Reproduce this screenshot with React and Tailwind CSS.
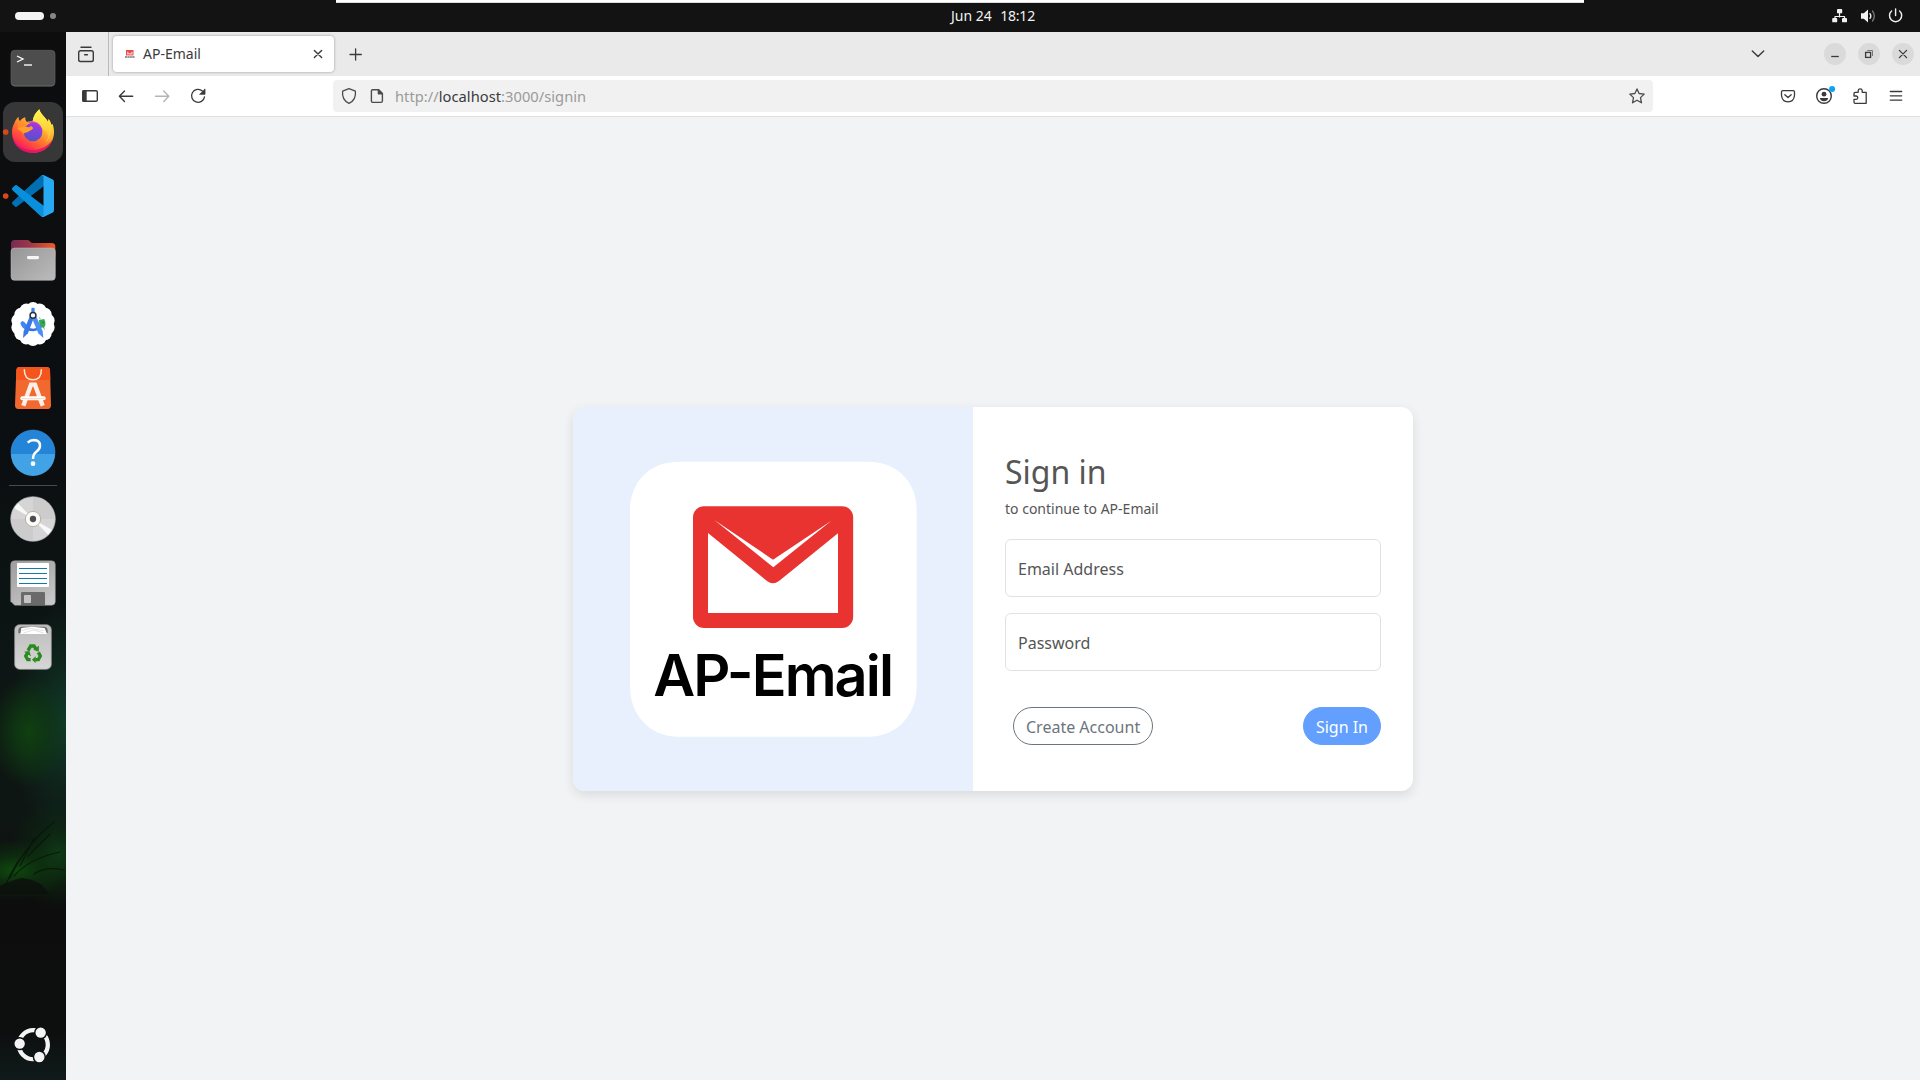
import React from "react";

const CHROME_FONT = "font-['Noto_Sans','Open_Sans',sans-serif]";

function DockIcon({ top, children }) {
  return (
    <svg className="block h-16 w-[66px] shrink-0" viewBox={`0 ${top} 198 192`}>
      {children}
    </svg>
  );
}

function Glyph({ className = "", children, width = 1.3 }) {
  return (
    <svg
      className={`block size-6 shrink-0 ${className}`}
      viewBox="0 0 24 24"
      fill="none"
      stroke="currentColor"
      strokeWidth={width}
      strokeLinecap="round"
      strokeLinejoin="round"
    >
      {children}
    </svg>
  );
}

function TerminalIcon() {
  return (
    <DockIcon top={108}>
      <rect x="33" y="151" width="132" height="107" rx="11" fill="#4d4d4d" stroke="#606060" strokeWidth="2" />
      <path d="M36 253 Q38 258 46 258 H152 Q161 258 163 253" fill="none" stroke="#6e6e6e" strokeWidth="2" />
      <path d="M51 168 L69 177 L51 186" fill="none" stroke="#fff" strokeWidth="4" />
      <path d="M72 195 H96" stroke="#fff" strokeWidth="4" />
    </DockIcon>
  );
}

function FirefoxIcon() {
  return (
    <DockIcon top={300}>
      <defs>
        <linearGradient id="ffBody" x1="140" y1="345" x2="65" y2="455" gradientUnits="userSpaceOnUse">
          <stop offset="0" stopColor="#fff04a" />
          <stop offset="0.3" stopColor="#ffb931" />
          <stop offset="0.55" stopColor="#ff7a2c" />
          <stop offset="0.8" stopColor="#ff3d45" />
          <stop offset="1" stopColor="#e8116f" />
        </linearGradient>
        <linearGradient id="ffGlobe" x1="105" y1="362" x2="90" y2="426" gradientUnits="userSpaceOnUse">
          <stop offset="0" stopColor="#a830e0" />
          <stop offset="0.5" stopColor="#7a45d8" />
          <stop offset="1" stopColor="#4f52c8" />
        </linearGradient>
        <linearGradient id="ffFlame" x1="125" y1="328" x2="140" y2="440" gradientUnits="userSpaceOnUse">
          <stop offset="0" stopColor="#fff44f" />
          <stop offset="0.5" stopColor="#ffd43c" />
          <stop offset="1" stopColor="#ff9a2c" stopOpacity="0" />
        </linearGradient>
      </defs>
      <rect x="9" y="306" width="180" height="180" rx="36" fill="#373737" />
      <circle cx="17" cy="396" r="8.5" fill="#d9481c" />
      <path d="M56 350 C55 356 57 360 60 363 C65 356 70 354 76 352 C75 358 77 363 81 366 C87 363 94 363 98 363 C100 348 108 337 118 328 C121 343 136 350 144 366 L146 358 C150 363 153 368 154 374 L157 371 C161 379 162 388 162 396 C162 431 134 459 99 459 C64 459 36 431 36 397 C36 386 39 377 43 370 C45 362 50 355 56 350 Z" fill="url(#ffBody)" />
      <path d="M37 412 C47 441 76 453 105 450 C130 447 148 434 158 418 C150 443 127 459 99 459 C66 459 42 440 37 412 Z" fill="#e20d70" opacity="0.8" />
      <path d="M98 363 C100 348 108 337 118 328 C121 343 136 350 144 366 L146 358 C157 374 164 408 146 432 C151 404 133 389 119 378 C110 371 103 366 98 363 Z" fill="url(#ffFlame)" />
      <circle cx="99" cy="396" r="28" fill="url(#ffGlobe)" />
      <path d="M82 366 C103 358 125 369 127 392 C121 381 112 378 106 379 C101 373 91 369 82 366 Z" fill="#b52ee0" opacity="0.8" />
      <path d="M53 386 C61 377 76 381 87 382 C92 377 96 377 99 384 C99 389 92 391 88 393 C84 399 74 396 70 402 C70 395 60 392 53 386 Z" fill="#ffa02b" />
      <path d="M60 363 C69 363 72 372 82 378 C77 382 67 378 54 385 C53 377 56 370 60 363 Z" fill="#ff8f2c" />
      <path d="M146 358 C151 382 152 405 140 424" fill="none" stroke="#ffe14a" strokeWidth="3" opacity="0.55" />
    </DockIcon>
  );
}

function CodeIcon() {
  return (
    <DockIcon top={492}>
      <circle cx="17" cy="588" r="8.5" fill="#d9481c" />
      <g transform="translate(36 525) scale(1.26)">
        <path fill="#0070b3" d="M96.46 10.8L75.86.88A6.23 6.23 0 0 0 68.75 2.08L1.3 63.58a4.17 4.17 0 0 0 0 6.17l5.51 5a4.17 4.17 0 0 0 5.32.24L93.36 13.37C96.09 11.3 100 13.25 100 16.67v-.24a6.25 6.25 0 0 0-3.54-5.63Z" />
        <path fill="#0a8fdd" d="M96.46 89.2L75.86 99.12a6.23 6.23 0 0 1-7.11-1.2L1.3 36.42a4.17 4.17 0 0 1 0-6.17l5.51-5a4.17 4.17 0 0 1 5.32-.24L93.36 86.63C96.09 88.7 100 86.75 100 83.33v.24a6.25 6.25 0 0 1-3.54 5.63Z" />
        <path fill="#27a9f3" d="M75.86 99.13a6.23 6.23 0 0 1-7.11-1.21C71.06 100.22 75 98.59 75 95.33V4.67C75 1.41 71.06-.22 68.75 2.08A6.23 6.23 0 0 1 75.86.87l20.6 9.91A6.25 6.25 0 0 1 100 16.41v67.18a6.25 6.25 0 0 1-3.54 5.63Z" />
      </g>
    </DockIcon>
  );
}

function FilesIcon() {
  return (
    <DockIcon top={24}>
      <defs>
        <linearGradient id="folderBack" x1="33" y1="0" x2="165" y2="0" gradientUnits="userSpaceOnUse">
          <stop offset="0" stopColor="#762a55" />
          <stop offset="0.45" stopColor="#a03848" />
          <stop offset="1" stopColor="#ef5a24" />
        </linearGradient>
        <linearGradient id="folderFront" x1="50" y1="84" x2="140" y2="182" gradientUnits="userSpaceOnUse">
          <stop offset="0" stopColor="#989898" />
          <stop offset="1" stopColor="#b8b8b8" />
        </linearGradient>
      </defs>
      <path d="M33 110 V71 Q33 60 44 60 H82 Q88 60 91 65 Q94 69 99 69 H155 Q166 69 166 80 V110 Z" fill="url(#folderBack)" />
      <rect x="33" y="84" width="133" height="97" rx="11" fill="url(#folderFront)" stroke="#c0c0c0" strokeWidth="1.5" />
      <rect x="81" y="108" width="36" height="9.5" rx="4" fill="#f6f6f6" />
    </DockIcon>
  );
}

function StudioIcon() {
  const lobes = Array.from({ length: 14 }, (_, i) => (i * Math.PI * 2) / 14 + Math.PI / 2);
  return (
    <DockIcon top={216}>
      <circle cx="99" cy="312" r="61.5" fill="#fff" />
      {lobes.map((a) => (
        <circle key={a} cx={99 + 46 * Math.cos(a)} cy={312 + 46 * Math.sin(a)} r="20" fill="#fff" />
      ))}
      <path d="M117 300 L133 297 Q138 308 136 316 L131 325 L118 317 Z" fill="#34a853" />
      <path d="M121 298 L118 292 M132 323 L133 329" stroke="#34a853" strokeWidth="2" />
      <circle cx="129" cy="307" r="1.8" fill="#124f24" />
      <path d="M67 309 Q79 330 101 330 Q113 329 121 322" fill="none" stroke="#3474e0" strokeWidth="8" strokeLinecap="round" />
      <path d="M61 309 Q66 300 73 306 L84 319 L77 329 Q65 324 61 309 Z" fill="#4285f4" />
      <path d="M90 287 L71 334 L69 354 L84 340 L101 295 Z" fill="#3b78e7" />
      <path d="M108 287 L128 334 L130 354 L115 340 L96 295 Z" fill="#4c8df6" />
      <rect x="94" y="263" width="10" height="18" rx="4" fill="#4285f4" />
      <circle cx="99" cy="286" r="8.8" fill="#fff" stroke="#263238" strokeWidth="4.5" />
    </DockIcon>
  );
}

function StoreIcon() {
  return (
    <DockIcon top={408}>
      <path d="M59 441 H140 Q149 441 150 450 L153 556 Q153 567 143 567 H55 Q45 567 45 556 L49 450 Q50 441 59 441 Z" fill="#f2692f" />
      <path d="M59 441 H140 Q149 441 150 450 L151 480 H48 L49 450 Q50 441 59 441 Z" fill="#f4551d" />
      <path d="M73 449 Q73 479 99 479 Q124 479 124 449" fill="none" stroke="#fbe6dc" strokeWidth="4.5" strokeLinecap="round" />
      <path d="M70 557 L93 494 H105 L128 557" fill="none" stroke="#fdeee7" strokeWidth="13" />
      <rect x="61" y="529" width="76" height="12" rx="6" fill="#fff" />
      <path d="M64 536 H134" stroke="#f6c1aa" strokeWidth="2" />
    </DockIcon>
  );
}

function HelpIcon() {
  return (
    <DockIcon top={600}>
      <circle cx="99" cy="696" r="66" fill="#2384d8" stroke="#4a9be0" strokeWidth="1.5" />
      <path d="M33 702 A66 66 0 0 0 165 702 Z" fill="#42a2e6" />
      <path d="M83 668 Q91 660 102 660 Q120 661 120 677 Q120 687 109 695 Q99 702 99 717" fill="none" stroke="#fff" strokeWidth="7.5" />
      <circle cx="99" cy="731" r="7" fill="#fff" />
    </DockIcon>
  );
}

function DiscIcon() {
  return (
    <DockIcon top={51}>
      <circle cx="99" cy="147" r="67" fill="#d5d5d5" stroke="#a9a9a9" strokeWidth="2" />
      <path d="M99 147 V82 A65 65 0 0 1 164 147 Z" fill="#cccccc" />
      <path d="M99 147 V212 A65 65 0 0 1 34 147 Z" fill="#cccccc" />
      <path d="M99 147 L43 115 A65 65 0 0 1 54 100 Z" fill="#f8f8f8" />
      <path d="M99 147 L155 179 A65 65 0 0 1 144 194 Z" fill="#f8f8f8" />
      <circle cx="99" cy="147" r="23" fill="#fafafa" stroke="#b8b09c" strokeWidth="3" />
      <circle cx="99" cy="147" r="9.5" fill="#4d4d4d" />
    </DockIcon>
  );
}

function FloppyIcon() {
  return (
    <DockIcon top={243}>
      <defs>
        <linearGradient id="floppy" x1="60" y1="272" x2="140" y2="406" gradientUnits="userSpaceOnUse">
          <stop offset="0" stopColor="#a0a0a0" />
          <stop offset="1" stopColor="#c8c8c8" />
        </linearGradient>
      </defs>
      <path d="M44 272 H154 Q166 272 166 284 V394 Q166 406 154 406 H44 L32 394 V284 Q32 272 44 272 Z" fill="url(#floppy)" stroke="#8b8b8b" strokeWidth="1.5" />
      <rect x="51" y="279" width="96" height="72" rx="2" fill="#fff" />
      <path d="M57 295.500 H141 M57 310.500 H141 M57 325.500 H141 M57 340.500 H141" stroke="#1279ae" strokeWidth="3" />
      <path d="M63 405 V370 Q63 366 67 366 H131 Q135 366 135 370 V405 Z" fill="#6a6a6a" />
      <rect x="72" y="375" width="21" height="24" rx="2" fill="#c4c4c4" />
    </DockIcon>
  );
}

function TrashIcon() {
  return (
    <DockIcon top={435}>
      <defs>
        <linearGradient id="trash" x1="0" y1="463" x2="0" y2="598" gradientUnits="userSpaceOnUse">
          <stop offset="0" stopColor="#bdbdbd" />
          <stop offset="1" stopColor="#d6d6d6" />
        </linearGradient>
      </defs>
      <rect x="44" y="464" width="110" height="134" rx="15" fill="url(#trash)" stroke="#9a9a9a" strokeWidth="2" />
      <path d="M55 490 V480 Q57 470 66 470 H132 Q142 471 143 480 V490 Z" fill="#707070" />
      <path d="M61 492 L64 474 L96 470 L134 474 L141 492 Z" fill="#fff" />
      <path d="M64 482 L92 475 L130 482 M70 489 L100 480 L131 489" fill="none" stroke="#c4c4c4" strokeWidth="1.5" />
      <g fill="none" stroke="#2a8a1e" strokeWidth="10">
        <path d="M84 542 L92 528 H102 L108 537" />
        <path d="M115 547 L121 558 L115 569 H106" />
        <path d="M92 569 H83 L77 558 L82 550" />
      </g>
      <g fill="#2a8a1e">
        <path d="M117 527 L116 545 L100 539 Z" />
        <path d="M107 559 V579 L96 569 Z" />
        <path d="M72 545 L88 543 L93 559 Z" />
      </g>
    </DockIcon>
  );
}

function UbuntuIcon() {
  return (
    <svg className="mt-auto block h-[62px] w-[66px] shrink-0" viewBox="0 1014 198 186">
      <defs>
        <mask id="ubuntuGaps">
          <rect x="0" y="1014" width="198" height="186" fill="#fff" />
          <circle cx="122" cy="1058" r="20" fill="#000" />
          <circle cx="59" cy="1091" r="20" fill="#000" />
          <circle cx="118" cy="1131" r="20" fill="#000" />
        </mask>
      </defs>
      <circle cx="100" cy="1094" r="43.5" fill="none" stroke="#f4f4f4" strokeWidth="13" mask="url(#ubuntuGaps)" />
      <circle cx="122" cy="1058" r="15.5" fill="#f4f4f4" />
      <circle cx="59" cy="1091" r="15.5" fill="#f4f4f4" />
      <circle cx="118" cy="1131" r="15.5" fill="#f4f4f4" />
    </svg>
  );
}

function Dock() {
  return (
    <aside className="flex w-[66px] shrink-0 flex-col bg-[#0d0e0e] bg-[radial-gradient(ellipse_40px_56px_at_29px_700px,#10400f_0%,#0f3a12c0_40%,transparent_100%),radial-gradient(ellipse_54px_120px_at_66px_690px,#103a2a_0%,#0f2e2190_55%,transparent_100%),radial-gradient(ellipse_58px_30px_at_14px_838px,#0f4a0e_0%,#0d360eb0_45%,transparent_100%),radial-gradient(ellipse_48px_56px_at_58px_822px,#0f3a16_0%,#0c2a1190_50%,transparent_100%),linear-gradient(to_bottom,#0d0d0e_0%,#0b0f11_42%,#0d1614_60%,#0e1613_75%,#0d0d0d_83%,#0d0e0e_95%,#0f1a1a_100%)] pt-1">
      <TerminalIcon />
      <FirefoxIcon />
      <CodeIcon />
      <FilesIcon />
      <StudioIcon />
      <StoreIcon />
      <HelpIcon />
      <div className="mx-[9px] mt-px mb-px h-px shrink-0 bg-[#4a4b4b]" />
      <DiscIcon />
      <FloppyIcon />
      <TrashIcon />
      {/* Bare branches of the wallpaper that show through the dock */}
      <svg className="mt-[135px] block h-20 w-[66px] shrink-0" viewBox="0 0 66 80" fill="none" stroke="#0a120a" strokeLinecap="round">
        <path d="M10 64 Q26 30 54 8 M14 62 Q30 44 60 38 M20 52 L34 24 M28 42 L50 20 M6 70 Q16 46 30 34 M34 60 Q46 52 64 56" strokeWidth="1.2" opacity="0.75" />
        <path d="M0 80 V72 Q12 66 22 64 Q40 66 46 76 L50 80 Z" fill="#0c0f0c" stroke="none" opacity="0.8" />
      </svg>
      <UbuntuIcon />
    </aside>
  );
}

function TopPanel() {
  return (
    <header className="relative flex h-8 shrink-0 items-center bg-[#131313] text-[#f2f2f2]">
      <div className="absolute top-0 left-[336px] h-[3px] w-[1248px] border-b border-[#dcdcdc] bg-white" />
      <div className="flex w-[951px] shrink-0 items-center gap-1.5 pl-[15px]">
        <span className="h-2 w-[29px] rounded-full bg-[#f4f4f4]" />
        <span className="size-1.5 rounded-full bg-[#868686]" />
      </div>
      <div className="flex w-[84px] justify-between pb-px text-[14px] leading-5 whitespace-nowrap">
        <span>Jun 24</span>
        <span className="tracking-[-0.2px]">18:12</span>
      </div>
      <div className="flex flex-1 items-center justify-end gap-1 pr-3">
        <Glyph>
          <path d="M11.500 9 V13 M7 16 V12.5 H16.500 V16" strokeWidth="1.2" />
          <g fill="currentColor" stroke="none">
            <rect x="9" y="5" width="5.2" height="4.3" rx="0.9" />
            <rect x="4.2" y="14" width="5" height="4.3" rx="0.9" />
            <rect x="14" y="14" width="5" height="4.3" rx="0.9" />
          </g>
        </Glyph>
        <Glyph>
          <path d="M5 9.3 H7.8 L12 5.4 V18.6 L7.8 14.7 H5 Z" fill="currentColor" stroke="none" />
          <path d="M14 9.6 Q15.7 12 14 14.4" />
          <path d="M16.5 7 Q20.2 12 16.5 17" stroke="#777" />
        </Glyph>
        <Glyph width={1.4}>
          <path d="M11.600 5 V11.5" />
          <path d="M7.600 7 A6.1 6.1 0 1 0 15.600 7" />
        </Glyph>
      </div>
    </header>
  );
}

function WindowButton({ children }) {
  return (
    <span className="flex size-[22px] items-center justify-center rounded-full bg-[#dadada]">
      <Glyph>{children}</Glyph>
    </span>
  );
}

function TabStrip() {
  return (
    <div className="flex h-11 items-center bg-[#eaeaea] text-[#3a3a3d]">
      <div className="flex h-full w-[43px] items-center border-r border-[#b9b9b9] pl-2">
        <Glyph width={1.4}>
          <rect x="4.7" y="8.7" width="14.6" height="10.8" rx="1.8" />
          <path d="M7 5.2 H17 M10.6 12.7 H13.4" />
        </Glyph>
      </div>
      <div className="ml-1 flex h-9 w-[221px] items-center rounded bg-white pr-1 pl-3 shadow-[0_0_3px_rgba(0,0,0,0.35)]">
        <svg className="block h-3 w-2.5 shrink-0" viewBox="0 0 10 12">
          <rect x="1" y="2" width="7.500" height="5.4" fill="#ea4a4a" />
          <path d="M2 3.4 L4.800 5.6 L7.600 3.4 V6.4 H2 Z" fill="#f9c2c2" />
          <path d="M0 9 H10" stroke="#777" strokeWidth="1.3" strokeDasharray="2 0.4" />
        </svg>
        <span className="ml-[8px] flex-1 text-[14px] leading-5">AP-Email</span>
        <Glyph width={1.4}>
          <path d="M8.4 8.4 L15.6 15.6 M15.6 8.4 L8.4 15.6" />
        </Glyph>
      </div>
      <Glyph className="ml-[10px]" width={1.3}>
        <path d="M11.600 6.8 V18 M6 12.5 H17.3" />
      </Glyph>
      <div className="ml-auto flex items-center pr-1.5">
        <Glyph className="mr-[54px]" width={1.4}>
          <path d="M6.3 9 L12 14.6 L17.7 9" />
        </Glyph>
        <div className="flex items-center gap-3">
          <WindowButton>
            <path d="M8.2 14.5 H15.8" strokeLinecap="butt" />
          </WindowButton>
          <WindowButton>
            <g strokeLinejoin="miter">
              <rect x="8.6" y="10.4" width="5" height="5" />
              <path d="M10.6 8.5 H15.5 V13.6" stroke="#777" strokeWidth="1" />
            </g>
          </WindowButton>
          <WindowButton>
            <path d="M8.4 8.4 L15.6 15.6 M15.6 8.4 L8.4 15.6" />
          </WindowButton>
        </div>
      </div>
    </div>
  );
}

function NavBar() {
  return (
    <div className="flex h-[41px] items-center border-b border-[#e0e0e0] bg-white pr-3 pl-3 text-[#3a3a3d]">
      <div className="flex items-center gap-3">
        <Glyph width={1.4}>
          <rect x="4.7" y="6.7" width="14.6" height="10.6" rx="1.3" />
          <path d="M5 7 H8 V17 H5 Z" fill="currentColor" />
        </Glyph>
        <Glyph width={1.4}>
          <path d="M18.7 12.2 H5.9 M10.5 7 L5.4 12.2 L10.5 17.4" />
        </Glyph>
        <Glyph width={1.4} className="text-[#b4b4b5]">
          <path d="M5.5 12.2 H18.4 M13.7 7 L18.8 12.2 L13.7 17.4" />
        </Glyph>
        <Glyph width={1.3}>
          <path d="M16.4 7 A6.5 6.5 0 1 0 18.5 12.8" />
          <path d="M19 5.3 V10.3 H14 Z" fill="currentColor" strokeWidth="0.8" />
        </Glyph>
      </div>
      <div className="ml-[123px] flex h-8 w-[1320px] items-center rounded bg-[#f1f1f1] pr-1 pl-1">
        <Glyph width={1.3} className="text-[#4c4c4e]">
          <path d="M12 4.7 L18.4 7.2 C19 12.5 17 17 12 19.3 C7 17 5 12.5 5.6 7.2 Z" />
        </Glyph>
        <Glyph width={1.4} className="ml-1 text-[#4c4c4e]">
          <path d="M7.6 5.7 H13.6 L17.4 9.5 V17 Q17.4 18.4 16 18.4 H7.6 Q6.4 18.4 6.4 17 V7 Q6.4 5.7 7.6 5.7 Z" />
          <path d="M13.4 5.7 V9.7 H17.4 Z" fill="currentColor" />
        </Glyph>
        <span className="ml-[6px] flex-1 text-[14.67px] leading-5 tracking-[0.04px] text-[#9a9a9a]">
          http://<span className="text-[#3a3a3d]">localhost</span>:3000/signin
        </span>
        <Glyph width={1.3} className="text-[#4c4c4e]">
          <path d="M12 4.9 L14.1 9.5 L19.2 10.1 L15.5 13.6 L16.5 18.8 L12 16.2 L7.5 18.8 L8.5 13.6 L4.8 10.1 L9.9 9.5 Z" />
        </Glyph>
      </div>
      <div className="ml-auto flex items-center gap-3">
        <Glyph width={1.3}>
          <path d="M6.8 6.6 H17.2 Q18.5 6.6 18.5 7.9 V11.3 Q18 17.7 12 17.9 Q6 17.7 5.5 11.3 V7.9 Q5.5 6.6 6.8 6.6 Z" />
          <path d="M8.8 10.7 L12 13.5 L15.2 10.7" />
        </Glyph>
        <Glyph width={1.4}>
          <circle cx="12" cy="12" r="7.3" />
          <g fill="currentColor" stroke="none">
            <circle cx="12" cy="10.2" r="2.4" />
            <path d="M7.8 13.9 H16.2 Q15.4 17.2 12 17.2 Q8.6 17.2 7.8 13.9 Z" />
          </g>
          <circle cx="20.1" cy="5" r="3" fill="#0aa5f5" stroke="none" />
        </Glyph>
        <Glyph width={1.3}>
          <path d="M6 12 V9.4 Q6 8.3 7.2 8.3 H10.2 V6.6 Q10.4 4.8 12.2 4.8 Q14 4.8 14.2 6.6 V8.3 H18.2 V19.3 H7.2 Q6 19.3 6 18.1 V15.4 H8.2 Q9.8 15.2 9.8 13.7 Q9.8 12.2 8.2 12 Z" />
        </Glyph>
        <Glyph width={1.3}>
          <path d="M6.3 7.5 H17.7 M6.3 11.8 H17.7 M6.3 16.2 H17.7" />
        </Glyph>
      </div>
    </div>
  );
}

function Logo() {
  return (
    <svg className="block h-[275.3px] w-[287px]" viewBox="210 213 861 826">
      <path
        d="M355 215 H925 C1010 215 1070 275 1070 360 V890 C1070 975 1010 1040 925 1040 H355 C270 1040 210 975 210 890 V360 C210 275 270 215 355 215 Z"
        fill="#fff"
      />
      <rect x="399" y="348.500" width="480.500" height="365.500" rx="33" fill="#e93331" />
      <path d="M444 429 L621 573 Q639 587 657 573 L834 430 V669 H444 Z" fill="#fff" />
      <path d="M463 390 L639 509 L814 392 L640 532 Z" fill="#fff" />
      <text
        x="280"
        y="919"
        textLength="722"
        lengthAdjust="spacing"
        fontSize="173"
        className="fill-black font-['Inter',sans-serif] font-semibold"
      >
        AP-Email
      </text>
    </svg>
  );
}

function SignInCard() {
  return (
    <div className="flex h-96 w-[840px] overflow-hidden rounded-xl bg-white shadow-[0_4px_12px_rgba(0,0,0,0.1)]">
      <div className="flex w-[400px] shrink-0 items-center justify-center bg-[#e8f0fe]">
        <Logo />
      </div>
      <form className="flex flex-1 flex-col px-8 pt-[46px] text-[#555]" onSubmit={(e) => e.preventDefault()}>
        <h2 className="text-[32px] leading-[38px]">Sign in</h2>
        <p className="mt-[7px] text-[14px] leading-[21px]">to continue to AP-Email</p>
        <div className="mt-5 flex h-[58px] items-center rounded-md border border-[#dee2e6] px-3 pt-0.5 text-base">Email Address</div>
        <div className="mt-4 flex h-[58px] items-center rounded-md border border-[#dee2e6] px-3 pt-0.5 text-base">Password</div>
        <div className="mt-9 flex justify-between pl-2">
          <button type="button" className="h-[38px] rounded-[20px] border border-[#6c757d] px-3 pt-0.5 text-base text-[#6c757d]">
            Create Account
          </button>
          <button type="submit" className="h-[38px] rounded-[20px] border border-[#629fff] bg-[#629fff] px-3 pt-0.5 text-base text-white">
            Sign In
          </button>
        </div>
      </form>
    </div>
  );
}

export default function App() {
  return (
    <div className={`flex h-screen w-screen flex-col overflow-hidden ${CHROME_FONT}`}>
      <TopPanel />
      <div className="flex min-h-0 flex-1">
        <Dock />
        <div className="flex min-w-0 flex-1 flex-col">
          <TabStrip />
          <NavBar />
          <main className="flex flex-1 items-center justify-center bg-[#f1f3f4] pt-px">
            <SignInCard />
          </main>
        </div>
      </div>
    </div>
  );
}
